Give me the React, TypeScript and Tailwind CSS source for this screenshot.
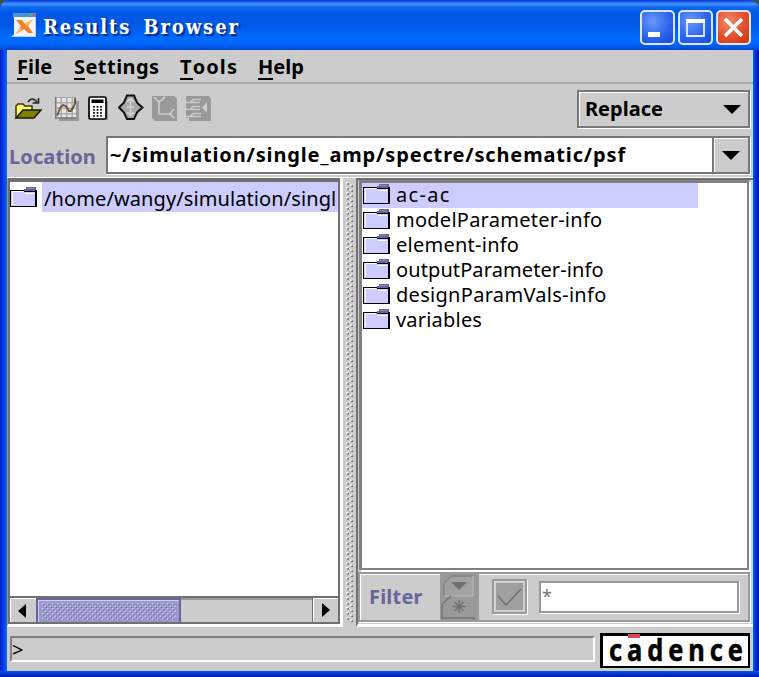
import React from "react";

const sans = "font-['Noto_Sans','Open_Sans',sans-serif] whitespace-pre leading-none";

function Folder({ className = "" }: { className?: string }) {
  return (
    <svg width="27" height="22" viewBox="0 0 27 22" className={`shrink-0 ${className}`} shapeRendering="crispEdges">
      <path d="M1 4h25v16H1z" fill="#ccccff" />
      <path d="M2 5h11v1H3v13H2zM15 7h9v1h-9z" fill="#fff" />
      <path d="M16 1h10v4H14V3h2z" fill="#666699" />
      <path d="M17 2h7v1h-7z" fill="#8888bb" />
      <path d="M0 4h14v1H1v16H0zM14 5h12v1H14z" fill="#000" />
      <path d="M25 4h2v17h-2zM0 20h27v1H0z" fill="#000" />
    </svg>
  );
}

const items: [string, string][] = [
  ["ac-ac", "tracking-[1.3px]"],
  ["modelParameter-info", "tracking-[0.25px]"],
  ["element-info", "tracking-[0.25px]"],
  ["outputParameter-info", "tracking-[0.1px]"],
  ["designParamVals-info", "tracking-[0.3px]"],
  ["variables", "tracking-[0.2px]"],
];

function Menu({ text, className }: { text: string; className: string }) {
  return (
    <div className={`shrink-0 ${sans} text-[20px] font-bold ${className}`}>
      <span className="inline-block h-[23px] border-b-2 border-black">{text[0]}</span>
      {text.slice(1)}
    </div>
  );
}

function Down({ className = "" }: { className?: string }) {
  return (
    <svg width="18" height="9" viewBox="0 0 18 9" className={className}>
      <path d="M0 0h18L9 9z" fill="#000" />
    </svg>
  );
}

function WinButton({ red = false, children }: { red?: boolean; children: React.ReactNode }) {
  return (
    <div
      className={`h-[35px] w-[35px] shrink-0 rounded-[5px] border-2 border-[#dce7ff] ${
        red
          ? "bg-[radial-gradient(circle_at_35%_30%,#f08c6c,#e35432_50%,#c93409)]"
          : "bg-[radial-gradient(circle_at_35%_30%,#6a98f8,#2b66ee_55%,#1748d2)]"
      }`}
    >
      <svg width="31" height="31" viewBox="0 0 31 31" fill="none">
        {children}
      </svg>
    </div>
  );
}

function Tools() {
  return (
    <div className="flex h-[30px] items-start">
      <svg width="28" height="28" viewBox="0 0 28 28" className="ml-[7px] mt-[2px] shrink-0">
        <path d="M2 22V10l2-2h5l2 2h7v5" fill="#ffff70" stroke="#333300" strokeWidth="1.5" />
        <path d="M3 20V11h13v4H9z" fill="#ffff70" />
        <path d="M2 22l7-8h18l-7 8z" fill="#808000" stroke="#1a1a00" strokeWidth="1.5" />
        <path d="M14 6q4-6 9 0M24.500 2v5h-6" fill="none" stroke="#222" strokeWidth="1.6" />
      </svg>
      <svg width="25" height="26" viewBox="0 0 25 26" className="ml-[13px] mt-[3px] shrink-0">
        <path d="M4 4h20v20H4z" fill="#999" />
        <path d="M0 0h21v21H0z" fill="#aaa" />
        <path d="M1.500 1h4v4h-4zM7 1h4v4H7zM12.500 1h4v4h-4zM18 1h3v4h-3zM1.500 6.500h4v4h-4zM7 6.500h4v4H7zM12.500 6.500h4v4h-4zM18 6.500h3v4h-3zM1.500 12h4v4h-4zM7 12h4v4H7zM12.500 12h4v4h-4zM18 12h3v4h-3zM1.500 17.500h4v3h-4zM7 17.500h4v3H7zM12.500 17.500h4v3h-4zM18 17.500h3v3h-3z" fill="#e6e6e6" />
        <path d="M.7 0v21H21" fill="none" stroke="#777" strokeWidth="1.400" />
        <path d="M2 19l3-8 3-3 3 1 3 5h2l4-7V1" fill="none" stroke="#6b543b" strokeWidth="1.900" />
      </svg>
      <svg width="22" height="26" viewBox="0 0 22 26" className="ml-[7px] mt-[2px] shrink-0">
        <path d="M5 5h16v19H5z" fill="#999" />
        <rect x="2" y="1" width="17" height="22" rx="1.500" fill="#fff" stroke="#000" strokeWidth="1.700" />
        <path d="M4.500 3.500h12V7h-12z" fill="#000" />
        <path d="M7 10v11M10.500 10v11M14 10v11" stroke="#000" strokeWidth="1.700" strokeDasharray="1.700 1.300" />
      </svg>
      <svg width="26" height="27" viewBox="0 0 26 27" className="ml-[9px] mt-[0px] shrink-0">
        <path d="M9 1.500h7l3 7 2 2 3.500 3-3.500 3-2 2-3 6.500H9l-3-6.500-2-2-3-3 3-3 2-2z" fill="#aaa" stroke="#111" strokeWidth="2" />
        <path d="M12.500 4v18M9 13h7M9 8l3.500-3.500L16 8M9 18l3.500 3.500L16 18" fill="none" stroke="#d4d4d4" strokeWidth="1.500" />
      </svg>
      <svg width="26" height="26" viewBox="0 0 26 26" className="ml-[8px] mt-[2px] shrink-0">
        <path d="M0 0h22l3 3v22H3l-3-3z" fill="#999" />
        <path d="M2 1l5 5 6-5M7 6v12h11l4-5M18 18l4 4" fill="none" stroke="#ccc" strokeWidth="1.700" />
      </svg>
      <svg width="27" height="26" viewBox="0 0 27 26" className="ml-[8px] mt-[2px] shrink-0">
        <path d="M0 0h23l2 3v22H3v-3H0z" fill="#999" />
        <path d="M0 6.500h4l3-3h8M0 13.500h4l3-3h7M0 20.500h4l3-3h8M4 6.500h10M4 13.500h10M4 20.500h11" fill="none" stroke="#ccc" strokeWidth="1.500" />
        <path d="M21 6v11l-5-5.500z" fill="#ccc" />
      </svg>
    </div>
  );
}

function Dots({ w, h, id, fg, hi, className = "" }: { w: number; h: number; id: string; fg: string; hi: string; className?: string }) {
  return (
    <svg width={w} height={h} className={className}>
      <defs>
        <pattern id={id} width="5" height="5" patternUnits="userSpaceOnUse">
          <path d="M0 0h1.500v1.500H0zM2.500 2.500H4V4H2.500z" fill={hi} />
          <path d="M1.200 1.200h1.400v1.400H1.200zM3.700 3.700H5V5H3.700z" fill={fg} />
        </pattern>
      </defs>
      <rect width={w} height={h} fill={`url(#${id})`} />
    </svg>
  );
}

function Grip() {
  return (
    <svg width="8" height="440">
      <defs>
        <pattern id="grip" width="8" height="5" patternUnits="userSpaceOnUse">
          <path d="M0 0h2v1.500H0zM4 2.500h2V4H4z" fill="#fff" />
          <path d="M1.300 1.200h1.700v1.600H1.300zM5.300 3.500h1.700V5H5.300z" fill="#666" />
        </pattern>
      </defs>
      <rect width="8" height="440" fill="url(#grip)" />
    </svg>
  );
}

export default function App() {
  return (
    <div className="h-[677px] w-[759px] overflow-hidden bg-[#385747]">
      <div className="flex h-full flex-col rounded-t-[9px] bg-[linear-gradient(90deg,#001cce_0,#003be0_3px,#0860f2_6px,#0860f2_753px,#003be0_755px,#00119a_759px)]">
        <div className="flex h-[50px] shrink-0 items-start rounded-t-[9px] bg-[linear-gradient(180deg,#0831d9_0,#3f96ff_4px,#1268ed_7px,#0058e6_12px,#0057e5_24px,#006aff_38px,#0068ff_44px,#0045cc_50px)]">
          <svg width="28" height="28" viewBox="0 0 28 28" className="ml-[10px] mt-[12px] shrink-0">
            <path d="M1 25l3-3V2h22v23z" fill="#b9d1ec" />
            <path d="M4 4h21v20H4z" fill="#eff4f6" />
            <path d="M3 1h23v4H3z" fill="#4c91d9" />
            <path d="M20 2h2v2h-2z" fill="#52b947" />
            <path d="M23 2h2v2h-2z" fill="#d2573b" />
            <path d="M6 8h6l3 4 8-5-5 7 5 7h-5l-4-4-8 5 5-8z" fill="#f58220" />
            <path d="M15 12l8-5-6 7zM6 22l6-5-2-1z" fill="#ffc36b" />
          </svg>
          <div className="ml-[5px] mt-[15px] whitespace-pre font-['DejaVu_Serif',serif] text-[20px] font-bold leading-[24px] tracking-[1.9px] text-white [text-shadow:2px_2px_1px_#0a2a8c] [font-stretch:condensed] [word-spacing:4px]">Results Browser</div>
          <div className="ml-auto mr-[8px] mt-[10px] flex gap-[3px]">
            <WinButton><path d="M6 20h12v5H6z" fill="#fff" /></WinButton>
            <WinButton><path d="M7 9h17v15H7z" stroke="#e6edff" strokeWidth="1.800" /><path d="M6 7h19v4H6z" fill="#fff" /></WinButton>
            <WinButton red><path d="M7 7l17 17M24 7L7 24" stroke="#fff" strokeWidth="3.500" /></WinButton>
          </div>
        </div>

        <div className="ml-[7px] flex h-[621px] w-[746px] flex-col bg-[#ccc]">
          <div className="flex h-[34px] shrink-0 items-start border-b-2 border-[#aaa] pl-[10px] pt-[7px]">
            <Menu text="File" className="w-[57px] tracking-[0.1px]" />
            <Menu text="Settings" className="w-[106px] tracking-[0.45px]" />
            <Menu text="Tools" className="w-[78px] tracking-[1.1px]" />
            <Menu text="Help" className="w-[60px]" />
          </div>

          <div className="flex h-[51px] shrink-0 items-start">
            <div className="pt-[10px]"><Tools /></div>
            <div className="ml-auto mr-[3px] mt-[6px] flex h-[38px] w-[173px] items-center border-2 border-[#777] pl-[6px] shadow-[1px_1px_0_#fff,inset_1px_1px_0_#fff]">
              <span className={`${sans} text-[20px] font-bold`}>Replace</span>
              <Down className="ml-auto mr-[7px]" />
            </div>
          </div>

          <div className="flex h-[42px] shrink-0 items-start pt-[1px]">
            <div className={`ml-[2px] mt-[11px] w-[97px] ${sans} text-[20px] font-bold tracking-[0.1px] text-[#666699]`}>Location</div>
            <div className="flex h-[38px] w-[606px] items-center border-2 border-r-0 border-[#777] bg-white pl-[2px] shadow-[0_1px_0_#fff]">
              <span className={`${sans} text-[20px] font-bold tracking-[0.85px]`}>~/simulation/single_amp/spectre/schematic/psf</span>
            </div>
            <div className="flex h-[38px] w-[38px] items-center justify-center border-2 border-[#777] shadow-[1px_1px_0_#fff,inset_1px_1px_0_#fff]">
              <Down />
            </div>
          </div>

          <div className="flex h-[450px] shrink-0 border-t border-white">
            <div className="flex h-[449px] w-[336px] flex-col border-b-[3px] border-l border-r-[3px] border-b-white border-l-[#999] border-r-white">
              <div className="flex h-[446px] flex-col border-2 border-t-[4px] border-[#707070] bg-white">
                <div className="flex h-[30px] items-start">
                  <Folder className="mt-[4px]" />
                  <div className="ml-[5px] h-[30px] w-[296px] overflow-hidden bg-[#ccccff] pl-[2px] pt-[6px]">
                    <span className={`${sans} text-[20px] tracking-[0.1px]`}>/home/wangy/simulation/singl</span>
                  </div>
                </div>
                <div className="mt-auto flex h-[26px] border-t-2 border-[#707070] bg-[#ccc]">
                  <div className="flex w-[26px] items-center justify-center border-l border-t border-white pr-[4px]"><svg width="8" height="14"><path d="M8 0v14L0 7z" /></svg></div>
                  <div className="flex h-[24px] w-[145px] items-center justify-center border-2 border-b-0 border-[#666699] bg-[#9999cc] shadow-[inset_1px_1px_0_#ccccff]">
                    <Dots id="thumb" w={134} h={17} fg="#666699" hi="#ccccff" />
                  </div>
                  <div className="flex-1 border-t-2 border-[#999]" />
                  <div className="flex w-[26px] items-center justify-center border-l border-[#707070] shadow-[inset_1px_1px_0_#fff]"><svg width="8" height="14"><path d="M0 0v14l8-7z" /></svg></div>
                </div>
              </div>
            </div>
            <div className="flex w-[13px] justify-center pt-[4px]">
              <Grip />
            </div>
            <div className="flex h-[449px] w-[397px] flex-col border-b-[3px] border-l-2 border-t-2 border-b-white border-l-[#707070] border-t-[#707070]">
              <div className="ml-[1px] mr-[4px] flex h-[390px] flex-col border-[3px] border-b-2 border-r-2 border-[#808080] bg-white shadow-[2px_2px_0_#fff]">
                {items.map(([name, tracking], i) => (
                  <div key={name} className={`flex h-[25px] shrink-0 items-start ${i === 0 ? "w-[336px] bg-[#ccccff]" : ""}`}>
                    <Folder className="ml-[1px]" />
                    <span className={`ml-[6px] mt-[2px] ${sans} text-[20px] ${tracking}`}>{name}</span>
                  </div>
                ))}
              </div>
              <div className="mr-[3px] mt-[2px] flex h-[50px] items-start border-2 border-[#999] shadow-[inset_1px_1px_0_#fff,1px_1px_0_#fff]">
                <div className={`ml-[9px] mt-[13px] w-[71px] ${sans} text-[20px] font-bold tracking-[0.2px] text-[#666699]`}>Filter</div>
                <svg width="39" height="46" viewBox="0 0 39 46" className="shrink-0">
                  <path d="M0 0h39v46H0z" fill="#999" />
                  <path d="M33 2H12L4 9v13h29z" fill="#a1a1a1" stroke="#777" />
                  <path d="M33 2v20H4" fill="none" stroke="#ccc" />
                  <path d="M11 8h16l-8 8z" fill="#707070" />
                  <path d="M11 22l-9 8v14h32v2" fill="none" stroke="#777" strokeWidth="1.500" />
                  <path d="M19 26v13M12.500 32.500h13M14.500 28l9 9M23.500 28l-9 9" stroke="#707070" strokeWidth="1.400" />
                </svg>
                <div className="ml-[13px] mt-[5px] flex h-[35px] w-[35px] items-center justify-center border-2 border-[#999] shadow-[inset_1px_1px_0_#ddd,1px_1px_0_#fff]">
                  <svg width="27" height="27" viewBox="0 0 27 27"><path d="M0 0h27v27H0z" fill="#a0a0a0" /><path d="M2 13l8 9L25 6" fill="none" stroke="#707070" strokeWidth="1.500" /></svg>
                </div>
                <div className="ml-[12px] mt-[7px] h-[32px] w-[200px] border-2 border-[#999] bg-white pl-[1px] pt-[4px] shadow-[1px_1px_0_#fff]">
                  <span className={`block ${sans} text-[18px] text-[#777]`}>*</span>
                </div>
              </div>
            </div>
          </div>

          <div className="flex h-[44px] shrink-0 items-start">
            <div className="ml-[3px] mt-[9px] h-[26px] w-[585px] border-2 border-b-white border-l-[#808080] border-r-white border-t-[#808080] pt-[2px]">
              <span className={`block ${sans} text-[20px]`}>&gt;</span>
            </div>
            <div className="relative ml-[5px] mt-[6px] h-[35px] w-[150px] border-[3px] border-b-2 border-r-2 border-black bg-white">
              <div className={`ml-[6px] mt-[-2px] ${sans} text-[31px] font-bold tracking-[6px] [transform-origin:0_0] [transform:scaleX(0.82)] [-webkit-text-stroke:0.5px_black]`}>cadence</div>
              <div className="absolute left-[25px] top-[-2px] h-[4px] w-[12px] bg-[#dc4450]" />
            </div>
          </div>
        </div>
        <div className="h-[6px] bg-[linear-gradient(180deg,#0055ee,#0030d0_60%,#00119a)]" />
      </div>
    </div>
  );
}
